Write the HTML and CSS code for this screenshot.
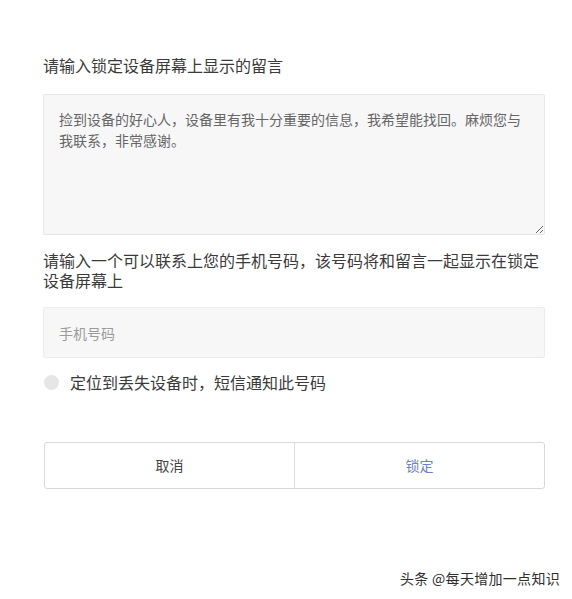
FILE: index.html
```html
<!DOCTYPE html>
<html lang="zh-CN">
<head>
<meta charset="utf-8">
<title>锁定设备</title>
<link rel="stylesheet" href="styles.css">
</head>
<body>
<div class="page">
  <div class="label title">请输入锁定设备屏幕上显示的留言</div>
  <textarea class="message" readonly>捡到设备的好心人，设备里有我十分重要的信息，我希望能找回。麻烦您与我联系，非常感谢。</textarea>
  <div class="label phone-label">请输入一个可以联系上您的手机号码，该号码将和留言一起显示在锁定设备屏幕上</div>
  <input class="phone" type="text" placeholder="手机号码">
  <div class="notify">
    <span class="radio"></span>
    <span class="notify-text">定位到丢失设备时，短信通知此号码</span>
  </div>
  <div class="actions">
    <div class="btn cancel">取消</div>
    <div class="btn lock">锁定</div>
  </div>
</div>
<div class="watermark">头条 @每天增加一点知识</div>
</body>
</html>
```

FILE: styles.css
```css
* { box-sizing: border-box; }
html, body {
  margin: 0;
  padding: 0;
  background: #ffffff;
}
body {
  font-family: "Noto Sans CJK SC", "Noto Sans", sans-serif;
  color: #333333;
  width: 572px;
  height: 599px;
  position: relative;
  overflow: hidden;
}
.page {
  padding: 54px 27px 0 43px;
  display: flex;
  flex-direction: column;
}
.label {
  font-size: 16px;
  color: #3a3a3a;
}
.title {
  line-height: 22px;
}
.message {
  display: block;
  margin: 18px 0 0 0;
  width: 502px;
  height: 141px;
  padding: 14px 15px;
  font-family: inherit;
  font-size: 14px;
  line-height: 21px;
  color: #666666;
  background: #f7f7f8;
  border: 1px solid #e6e6e6;
  border-radius: 2px;
  resize: vertical;
  outline: none;
}
.phone-label {
  margin-top: 15px;
  line-height: 20px;
}
.phone {
  display: block;
  margin: 17px 0 0 0;
  width: 502px;
  height: 51px;
  padding: 0 15px;
  font-family: inherit;
  font-size: 14px;
  color: #333;
  background: #f7f7f7;
  border: 1px solid #ececec;
  border-radius: 2px;
  outline: none;
}
.phone::placeholder {
  color: #9a9a9a;
}
.notify {
  margin-top: 13px;
  height: 22px;
  display: flex;
  align-items: center;
  gap: 11px;
  padding-left: 1px;
}
.radio {
  width: 15px;
  height: 15px;
  border-radius: 50%;
  background: #e6e6e6;
  flex: none;
}
.notify-text {
  font-size: 16px;
  line-height: 22px;
  color: #3a3a3a;
}
.actions {
  margin-top: 49px;
  margin-left: 1px;
  width: 501px;
  height: 47px;
  display: flex;
  border: 1px solid #d9d9d9;
  border-radius: 3px;
}
.btn {
  flex: 1;
  display: flex;
  align-items: center;
  justify-content: center;
  font-size: 14px;
  line-height: 20px;
  padding-bottom: 2px;
}
.cancel {
  border-right: 1px solid #dddddd;
  color: #444444;
}
.lock {
  color: #6e7fcb;
}
.watermark {
  position: absolute;
  right: 12px;
  top: 567px;
  font-size: 14px;
  line-height: 22px;
  color: #2e2e2e;
  letter-spacing: 0.3px;
}
```
